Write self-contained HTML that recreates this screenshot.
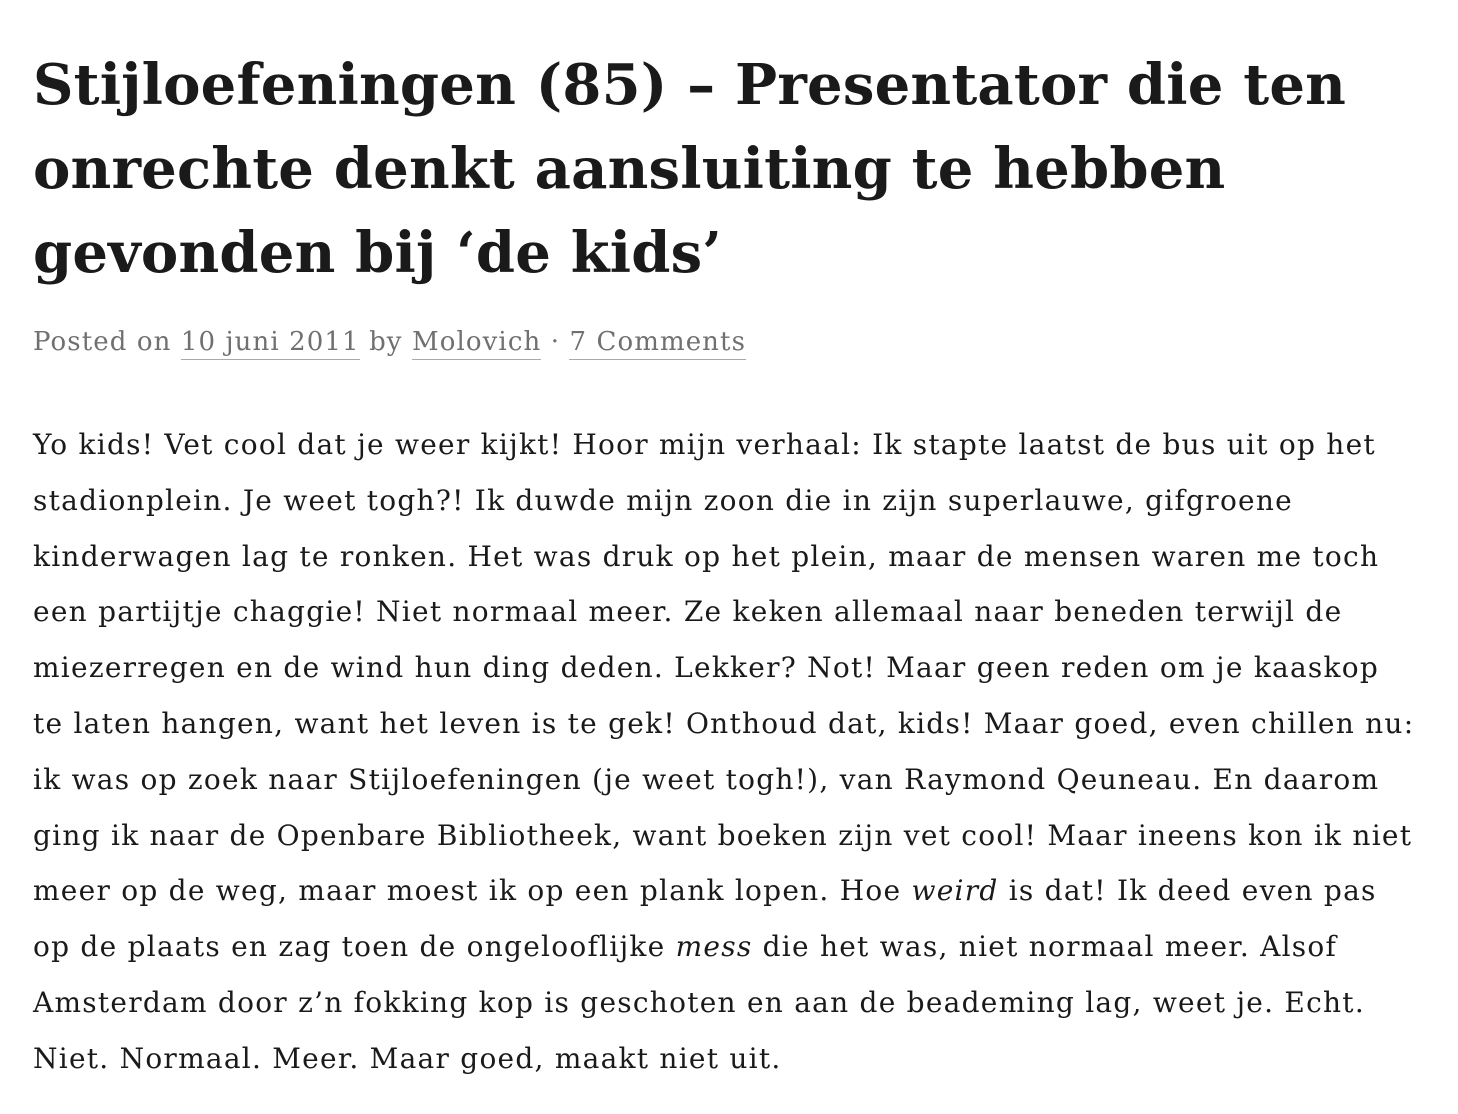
<!DOCTYPE html>
<html><head><meta charset="utf-8"><style>
body{margin:0;background:#fff;width:1458px;height:1114px;overflow:hidden}
h1{position:absolute;left:33px;top:43px;margin:0;font-family:"DejaVu Serif",serif;font-weight:bold;font-size:56px;line-height:84px;color:#1a1a1a;white-space:nowrap;letter-spacing:0.2px}
.meta{position:absolute;left:33px;top:327px;font-family:"DejaVu Serif",serif;font-size:26px;color:#707070;white-space:nowrap;letter-spacing:1.1px}
.meta span{border-bottom:1px solid #aaa;padding-bottom:2px}
.body{position:absolute;left:33px;top:417px;font-family:"DejaVu Serif",serif;font-size:28px;line-height:55.8px;color:#1a1a1a;white-space:nowrap;letter-spacing:1.25px}
</style></head><body>
<h1>Stijloefeningen (85) – Presentator die ten<br>onrechte denkt aansluiting te hebben<br>gevonden bij ‘de kids’</h1>
<div class="meta">Posted on <span>10 juni 2011</span> by <span>Molovich</span> · <span>7 Comments</span></div>
<div class="body">Yo kids! Vet cool dat je weer kijkt! Hoor mijn verhaal: Ik stapte laatst de bus uit op het<br>stadionplein. Je weet togh?! Ik duwde mijn zoon die in zijn superlauwe, gifgroene<br>kinderwagen lag te ronken. Het was druk op het plein, maar de mensen waren me toch<br>een partijtje chaggie! Niet normaal meer. Ze keken allemaal naar beneden terwijl de<br>miezerregen en de wind hun ding deden. Lekker? Not! Maar geen reden om je kaaskop<br>te laten hangen, want het leven is te gek! Onthoud dat, kids! Maar goed, even chillen nu:<br>ik was op zoek naar Stijloefeningen (je weet togh!), van Raymond Qeuneau. En daarom<br>ging ik naar de Openbare Bibliotheek, want boeken zijn vet cool! Maar ineens kon ik niet<br>meer op de weg, maar moest ik op een plank lopen. Hoe <i>weird</i> is dat! Ik deed even pas<br>op de plaats en zag toen de ongelooflijke <i>mess</i> die het was, niet normaal meer. Alsof<br>Amsterdam door z’n fokking kop is geschoten en aan de beademing lag, weet je. Echt.<br>Niet. Normaal. Meer. Maar goed, maakt niet uit.</div>
</body></html>
